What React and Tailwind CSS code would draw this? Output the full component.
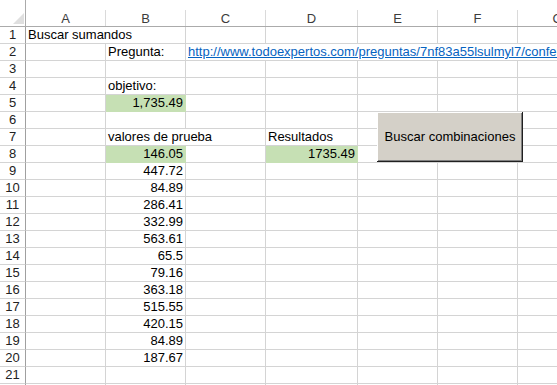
import React from 'react';

const cols = ['A', 'B', 'C', 'D', 'E', 'F', 'G'];

// each row: list of cells { span, text, right, green, link }
const e = {};
const rows = [
  [{ span: 'col-span-2', text: 'Buscar sumandos' }, e, e, e, e, e],
  [e, { text: 'Pregunta:' }, { span: 'col-span-5', text: 'http://www.todoexpertos.com/preguntas/7nf83a55lsulmyl7/conferencia-de-excel-sumandos', link: true }],
  [e, e, e, e, e, e, e],
  [e, { text: 'objetivo:' }, e, e, e, e, e],
  [e, { text: '1,735.49', right: true, green: true }, e, e, e, e, e],
  [e, e, e, e, e, e, e],
  [e, { span: 'col-span-2', text: 'valores de prueba' }, { text: 'Resultados' }, e, e, e],
  [e, { text: '146.05', right: true, green: true }, e, { text: '1735.49', right: true, green: true }, e, e, e],
];

const values = ['447.72', '84.89', '286.41', '332.99', '563.61', '65.5', '79.16', '363.18', '515.55', '420.15', '84.89', '187.67'];
values.forEach(v => rows.push([e, { text: v, right: true }, e, e, e, e, e]));
rows.push([e, e, e, e, e, e, e]);
rows.push([e, e, e, e, e, e, e]);

function Cell({ cell }) {
  const base = 'h-[17px] border-b border-r whitespace-nowrap overflow-hidden leading-[16px] px-[2px]';
  const fill = cell.green ? 'bg-[#c6e0b4] border-[#c6e0b4]' : 'border-[#d4d4d4]';
  return (
    <div className={`${base} ${fill} ${cell.span || ''} ${cell.right ? 'text-right' : 'text-left'}`}>
      {cell.link ? (
        <span className="text-[#0563c1] underline">{cell.text}</span>
      ) : (
        cell.text
      )}
    </div>
  );
}

export default function App() {
  return (
    <div className="w-[557px] h-[385px] overflow-hidden bg-white relative font-['Liberation_Sans',Arial,sans-serif] text-[13px] text-black">
      <div className="grid grid-cols-[26px_80px_80px_80px_92px_80px_80px_80px] w-[598px]">
        {/* corner */}
        <div className="h-[27px] border-r border-b border-[#ababab] relative">
          <svg width="26" height="27" className="block">
            <polygon points="24,13 24,24 13,24" fill="#dfdfdf" />
          </svg>
        </div>
        {cols.map(c => (
          <div key={c} className="h-[27px] border-b border-[#ababab] pt-[10px]">
            <div className="h-full flex items-end justify-center leading-[15px] border-r border-[#dadada] text-[#3c3c3c]">{c}</div>
          </div>
        ))}

        {rows.map((row, i) => (
          <React.Fragment key={i}>
            <div className="h-[17px] border-b border-r border-b-[#d4d4d4] border-r-[#a0a0a0] text-center leading-[16px] text-[#222]">{i + 1}</div>
            {row.map((cell, j) => <Cell key={j} cell={cell} />)}
          </React.Fragment>
        ))}
      </div>

      <button className="absolute left-[377px] top-[112px] w-[146px] h-[50px] bg-[#d4d0c8] text-[13px] text-black shadow-[inset_-1px_-1px_#202020,inset_1px_1px_#ffffff,inset_-2px_-2px_#808080]">
        Buscar combinaciones
      </button>
    </div>
  );
}
